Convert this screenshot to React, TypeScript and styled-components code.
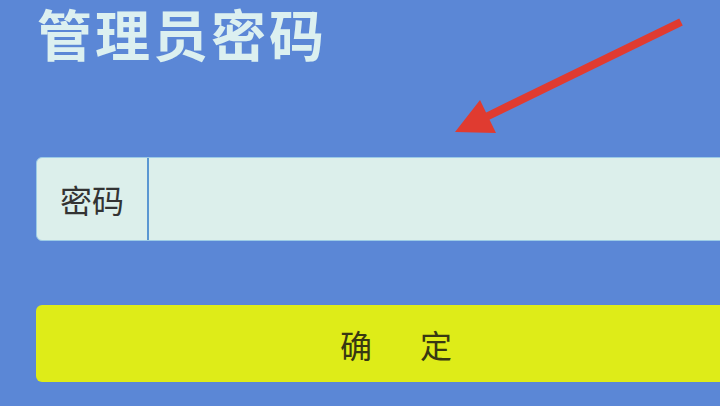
import React from 'react';
import styled, {createGlobalStyle} from 'styled-components';

const GlobalStyle = createGlobalStyle`
  html, body {
    margin: 0;
    padding: 0;
    background: #5b87d6;
    overflow: hidden;
  }
  body {
    font-family: "Noto Sans CJK SC", "Noto Sans", sans-serif;
  }
`;

const Page = styled.div`
  position: relative;
  width: 720px;
  height: 406px;
  overflow: hidden;
  background: #5b87d6;
`;

const Content = styled.div`
  display: flex;
  flex-direction: column;
  width: 720px;
  padding-left: 36px;
`;

const Title = styled.h1`
  margin: 0;
  padding-left: 1px;
  font-size: 55px;
  line-height: 64px;
  font-weight: 700;
  color: #dcf0f0;
  letter-spacing: 3px;
`;

const Field = styled.div`
  display: flex;
  align-items: stretch;
  height: 84px;
  margin-top: 93px;
  background: #dcefeb;
  border: 1px solid #9ccbe6;
  border-radius: 6px;
  box-sizing: border-box;
`;

const Label = styled.label`
  display: flex;
  align-items: center;
  justify-content: center;
  width: 110px;
  font-size: 32px;
  color: #333;
  border-right: 2px solid #5b97d2;
`;

const Input = styled.input`
  flex: 1;
  border: none;
  background: transparent;
  outline: none;
  font-size: 32px;
`;

const Button = styled.button`
  margin-top: 64px;
  height: 77px;
  border: none;
  border-radius: 6px;
  background: #deec18;
  color: #383812;
  font-family: "Noto Sans CJK SC", sans-serif;
  font-size: 32px;
  letter-spacing: 8px;
  padding: 0 0 0 8px;
  white-space: pre;
`;

const Arrow = styled.svg`
  position: absolute;
  left: 0;
  top: 0;
  pointer-events: none;
`;

export default function App() {
    return (
        <>
            <GlobalStyle/>
            <Page>
                <Content>
                    <Title>管理员密码</Title>
                    <Field>
                        <Label>密码</Label>
                        <Input type="password"/>
                    </Field>
                    <Button>确　定</Button>
                </Content>
                <Arrow width="720" height="406">
                    <line x1="681" y1="22" x2="486" y2="117" stroke="#e03b30" strokeWidth="8"/>
                    <polygon points="455,132 480,100 496,133" fill="#e03b30"/>
                </Arrow>
            </Page>
        </>
    );
}
